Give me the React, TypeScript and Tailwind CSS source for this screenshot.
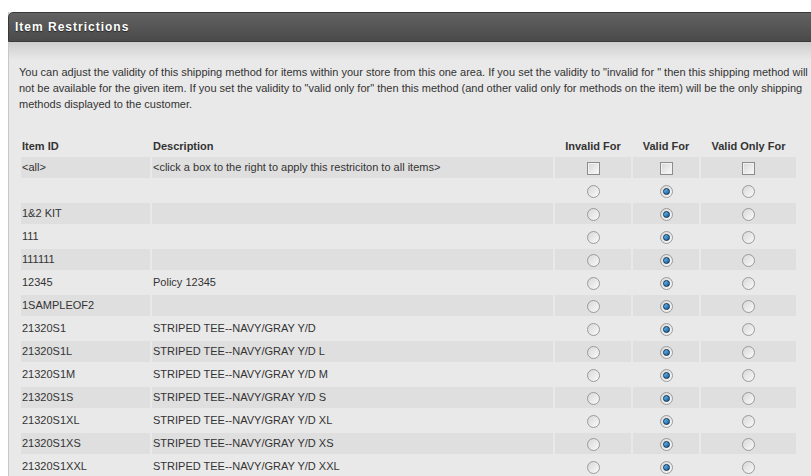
const rows: { id: string; desc: string }[] = [
  { id: "", desc: "" },
  { id: "1&2 KIT", desc: "" },
  { id: "111", desc: "" },
  { id: "111111", desc: "" },
  { id: "12345", desc: "Policy 12345" },
  { id: "1SAMPLEOF2", desc: "" },
  { id: "21320S1", desc: "STRIPED TEE--NAVY/GRAY Y/D" },
  { id: "21320S1L", desc: "STRIPED TEE--NAVY/GRAY Y/D L" },
  { id: "21320S1M", desc: "STRIPED TEE--NAVY/GRAY Y/D M" },
  { id: "21320S1S", desc: "STRIPED TEE--NAVY/GRAY Y/D S" },
  { id: "21320S1XL", desc: "STRIPED TEE--NAVY/GRAY Y/D XL" },
  { id: "21320S1XS", desc: "STRIPED TEE--NAVY/GRAY Y/D XS" },
  { id: "21320S1XXL", desc: "STRIPED TEE--NAVY/GRAY Y/D XXL" },
];

function Box() {
  return (
    <span className="inline-block w-[13px] h-[13px] border border-[#8c8c8c] bg-gradient-to-br from-[#d6d6d6] to-[#fbfbfb] shadow-[inset_0_0_0_1px_#f2f2f2] align-middle" />
  );
}

function Radio({ on }: { on?: boolean }) {
  return (
    <span className="inline-flex items-center justify-center w-[13px] h-[13px] rounded-full border border-[#9a9a9a] bg-gradient-to-br from-[#d8d8d8] to-[#fafafa] align-middle">
      {on && (
        <span className="w-[7px] h-[7px] rounded-full border border-[#0b2f4d] bg-gradient-to-br from-[#6ec0f5] to-[#0a5a9e]" />
      )}
    </span>
  );
}

export default function App() {
  return (
    <div className="min-h-[476px] bg-white pt-3 pl-2 overflow-hidden text-[11px] text-[#333] font-['Liberation_Sans',Arial,sans-serif]">
      <div className="w-[830px] border-l border-[#c8c8c8] bg-[#e9e9e9] min-h-[464px]">
        <div className="h-[30px] -ml-px rounded-tl-[5px] border border-[#3a3a3a] bg-gradient-to-b from-[#626262] to-[#4a4a4a] pl-[6px] flex items-center">
          <span className="text-white font-bold text-[12px] tracking-[1px] [text-shadow:0_1px_1px_#222]">
            Item Restrictions
          </span>
        </div>
        <div className="h-[18px] bg-gradient-to-b from-[#cdcdcd] to-[#e9e9e9]" />
        <div className="pl-[10px] pr-[30px]">
          <p className="leading-[16px] pt-[4px] w-[790px]">
            You can adjust the validity of this shipping method for items within your store from this one area. If you set the validity to "invalid for " then this shipping method will not be available for the given item. If you set the validity to "valid only for" then this method (and other valid only for methods on the item) will be the only shipping methods displayed to the customer.
          </p>
          <table className="mt-[24px] table-fixed border-separate border-spacing-[2px] w-[779px]">
            <colgroup>
              <col className="w-[129px]" />
              <col className="w-[401px]" />
              <col className="w-[76px]" />
              <col className="w-[66px]" />
              <col className="w-[95px]" />
            </colgroup>
            <thead>
              <tr className="font-bold text-left">
                <th className="h-[17px] pl-[1px] align-middle">Item ID</th>
                <th className="pl-[1px] align-middle">Description</th>
                <th className="text-center align-middle">Invalid For</th>
                <th className="text-center align-middle">Valid For</th>
                <th className="text-center align-middle">Valid Only For</th>
              </tr>
            </thead>
            <tbody>
              <tr className="bg-[#dfdfdf]">
                <td className="h-[21px] pl-[1px]">&lt;all&gt;</td>
                <td className="pl-[1px]">&lt;click a box to the right to apply this restriciton to all items&gt;</td>
                <td className="text-center"><Box /></td>
                <td className="text-center"><Box /></td>
                <td className="text-center"><Box /></td>
              </tr>
              {rows.map((r, i) => (
                <tr key={i} className={i % 2 === 1 ? "bg-[#dfdfdf]" : ""}>
                  <td className="h-[21px] pl-[1px]">{r.id}</td>
                  <td className="pl-[1px]">{r.desc}</td>
                  <td className="text-center"><Radio /></td>
                  <td className="text-center"><Radio on /></td>
                  <td className="text-center"><Radio /></td>
                </tr>
              ))}
            </tbody>
          </table>
        </div>
      </div>
    </div>
  );
}
